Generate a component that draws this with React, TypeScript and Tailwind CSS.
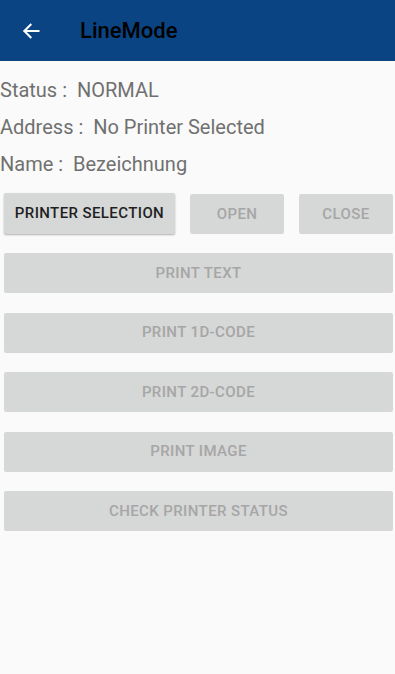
import React from "react";

const font = { fontFamily: "Roboto, 'Noto Sans', sans-serif" };

function DisabledButton({ label, className = "" }: { label: string; className?: string }) {
  return (
    <div
      className={`h-[40px] rounded-[2px] bg-[#d6d7d7] flex items-center justify-center text-[15px] font-medium tracking-[0.4px] text-[#a6a6a6] ${className}`}
    >
      {label}
    </div>
  );
}

export default function App() {
  return (
    <div className="w-[395px] h-[674px] bg-[#fafafa] flex flex-col" style={font}>
      <div className="h-[61px] bg-[#0b4483] flex items-center shrink-0">
        <svg className="ml-[21px]" width="20" height="20" viewBox="0 0 24 24" fill="none" stroke="white" strokeWidth="2.4" strokeLinecap="square">
          <path d="M21 12H4.5" />
          <path d="M11.5 4.5L4 12l7.5 7.5" />
        </svg>
        <div className="ml-[39px] text-[22px] font-medium text-black">LineMode</div>
      </div>
      <div className="flex flex-col text-[20px] text-[#707070] mt-[17px]">
        <div className="h-[24px] leading-[24px]">Status :&nbsp; NORMAL</div>
        <div className="h-[24px] leading-[24px] mt-[13px]">Address :&nbsp; No Printer Selected</div>
        <div className="h-[24px] leading-[24px] mt-[13px]">Name :&nbsp; Bezeichnung</div>
      </div>
      <div className="flex mt-[17px] pl-[4px] pr-[2px]">
        <div className="w-[171px] h-[41px] rounded-[2px] bg-[#d6d7d7] shadow-[0_1px_2px_rgba(0,0,0,0.3)] flex items-center justify-center text-[15px] font-medium tracking-[0.4px] text-[#1f1f1f]">
          PRINTER SELECTION
        </div>
        <DisabledButton label="OPEN" className="w-[94px] ml-[15px] mt-[1px]" />
        <DisabledButton label="CLOSE" className="w-[94px] ml-[15px] mt-[1px]" />
      </div>
      <div className="flex flex-col pr-[2px] pl-[4px] mt-[19px] gap-[19.5px]">
        <DisabledButton label="PRINT TEXT" />
        <DisabledButton label="PRINT 1D-CODE" />
        <DisabledButton label="PRINT 2D-CODE" />
        <DisabledButton label="PRINT IMAGE" />
        <DisabledButton label="CHECK PRINTER STATUS" />
      </div>
    </div>
  );
}
